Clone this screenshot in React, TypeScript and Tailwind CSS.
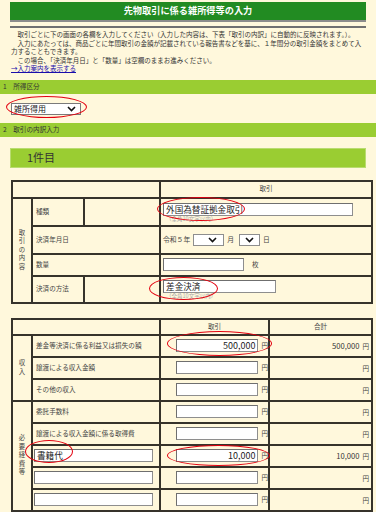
import React from "react";

// --- DATA ---
const incomeRows = [
  { label: "差金等決済に係る利益又は損失の額", amount: "500,000", total: "500,000" },
  { label: "譲渡による収入金額", amount: "", total: "" },
  { label: "その他の収入", amount: "", total: "" },
];

const expenseRows = [
  { label: "委託手数料", free: false, name: "", amount: "", total: "" },
  { label: "譲渡による収入金額に係る取得費", free: false, name: "", amount: "", total: "" },
  { label: "", free: true, name: "書籍代", amount: "10,000", total: "10,000" },
  { label: "", free: true, name: "", amount: "", total: "" },
  { label: "", free: true, name: "", amount: "", total: "" },
];

const td = "border-2 border-[#36332b] p-0";

// --- PARTS ---
function Ellipse({ className }: { className: string }) {
  return (
    <div
      className={`pointer-events-none absolute rounded-[50%] border-[1.5px] border-[#e3000f] ${className}`}
    />
  );
}

function Box({ value = "", className = "", right = false }: { value?: string; className?: string; right?: boolean }) {
  return (
    <div
      className={`flex items-center overflow-hidden whitespace-nowrap bg-white border border-[#8e8e8e] border-t-[#6f6f6f] border-l-[#6f6f6f] px-[2px] text-[8.6px] leading-none text-[#222] ${
        right ? "justify-end" : ""
      } ${className}`}
    >
      {value}
    </div>
  );
}

function Chevron() {
  return (
    <svg width="9" height="6" viewBox="0 0 9 6" className="shrink-0">
      <polyline points="1,1 4.5,4.5 8,1" fill="none" stroke="#111" strokeWidth="1.6" />
    </svg>
  );
}

function Vertical({ text }: { text: string }) {
  return (
    <div className="flex flex-col items-center text-[6.4px] text-[#444]">
      {text.split("").map((c, i) => (
        <span key={i} className="block h-[8.5px] leading-[8.5px]">
          {c}
        </span>
      ))}
    </div>
  );
}

function Bar({ children }: { children: React.ReactNode }) {
  return (
    <div className="flex h-[14px] items-center bg-[#9acd32] pl-[3px] text-[6.6px] text-[#333]">
      {children}
    </div>
  );
}

// --- MAIN ---
export default function App() {
  return (
    <div className="relative h-[512px] w-[376px] overflow-hidden bg-[#fff8dc] font-['Noto_Sans_CJK_JP','Noto_Sans',sans-serif]">
      {/* title */}
      <div className="mx-[10px] mt-[2px] flex h-[20px] items-center justify-center border-b-2 border-[#8c8c8c] bg-[#228b22] text-[9.2px] font-bold text-white">
        先物取引に係る雑所得等の入力
      </div>
      <div className="mx-[10px] mt-[4px] h-[2px] bg-[#707070]" />

      <div className="mt-[2px] whitespace-nowrap px-[11px] text-[6.5px] leading-[8.5px] text-[#333]">
        <div>　取引ごとに下の画面の各欄を入力してください（入力した内容は、下表「取引の内訳」に自動的に反映されます。）。</div>
        <div>　入力にあたっては、商品ごとに年間取引の金額が記載されている報告書などを基に、１年間分の取引金額をまとめて入</div>
        <div>力することもできます。</div>
        <div>　この場合、「決済年月日」と「数量」は空欄のままお進みください。</div>
        <div>
          　<span className="text-[#1a0dab] underline">→入力案内を表示する</span>
        </div>
      </div>

      <div className="mt-[7px]">
        <Bar>1　所得区分</Bar>
      </div>
      <div className="ml-[11px] mt-[9px] flex h-[12px] w-[70px] items-center justify-between border border-[#7a7a7a] bg-white pl-[2px] pr-[4px] text-[8px] text-[#222]">
        <span>雑所得用</span>
        <Chevron />
      </div>
      <div className="mt-[8px]">
        <Bar>2　取引の内訳入力</Bar>
      </div>

      <div className="mx-[10px] mt-[11px] flex h-[20px] items-center border border-[#b9dc70] bg-[#9acd32] pl-[16px] text-[11px] text-[#333]">
        1件目
      </div>

      {/* table 1 */}
      <table className="ml-[11px] mt-[12px] w-[360px] table-fixed border-collapse text-[6.6px] text-[#444]">
        <colgroup>
          <col className="w-[20px]" />
          <col className="w-[52px]" />
          <col className="w-[76px]" />
          <col className="w-[212px]" />
        </colgroup>
        <tbody>
          <tr className="h-[17px]">
            <td colSpan={3} className={td} />
            <td className={`${td} text-center`}>取引</td>
          </tr>
          <tr className="h-[28px]">
            <td rowSpan={4} className={td}>
              <Vertical text="取引の内容" />
            </td>
            <td className={`${td} pl-[3px]`}>種類</td>
            <td className={td} />
            <td className={`${td} pl-[2px]`}>
              <Box value="外国為替証拠金取引" className="mt-[2px] h-[13px] w-[190px]" />
              <div className="pl-[3px] text-[5.5px] leading-[7px] text-[#aaa]">（全角10文字以内）</div>
            </td>
          </tr>
          <tr className="h-[28px]">
            <td colSpan={2} className={`${td} pl-[3px]`}>決済年月日</td>
            <td className={`${td} pl-[2px]`}>
              <div className="flex items-center gap-[3px] text-[6.8px]">
                <span>令和５年</span>
                <div className="flex h-[12px] w-[31px] items-center justify-end border border-[#8e8e8e] bg-white pr-[6px]">
                  <Chevron />
                </div>
                <span>月</span>
                <div className="ml-[2px] flex h-[12px] w-[21px] items-center justify-center border border-[#8e8e8e] bg-white">
                  <Chevron />
                </div>
                <span>日</span>
              </div>
            </td>
          </tr>
          <tr className="h-[22px]">
            <td colSpan={2} className={`${td} pl-[3px]`}>数量</td>
            <td className={`${td} pl-[2px]`}>
              <div className="flex items-center gap-[8px]">
                <Box className="h-[13px] w-[81px]" />
                <span>枚</span>
              </div>
            </td>
          </tr>
          <tr className="h-[27px]">
            <td className={`${td} pl-[3px]`}>決済の方法</td>
            <td className={td} />
            <td className={`${td} pl-[2px]`}>
              <Box value="差金決済" className="mt-[2px] h-[13px] w-[113px]" />
              <div className="pl-[3px] text-[5.5px] leading-[7px] text-[#aaa]">（全角10文字以内）</div>
            </td>
          </tr>
        </tbody>
      </table>

      {/* table 2 */}
      <table className="ml-[11px] mt-[14px] w-[360px] table-fixed border-collapse text-[6.6px] text-[#444]">
        <colgroup>
          <col className="w-[20px]" />
          <col className="w-[128px]" />
          <col className="w-[109px]" />
          <col className="w-[103px]" />
        </colgroup>
        <tbody>
          <tr className="h-[16px]">
            <td colSpan={2} className={td} />
            <td className={`${td} text-center`}>取引</td>
            <td className={`${td} text-center`}>合計</td>
          </tr>
          {incomeRows.map((r, i) => (
            <tr key={r.label} className="h-[22px]">
              {i === 0 && (
                <td rowSpan={3} className={td}>
                  <Vertical text="収入" />
                </td>
              )}
              <td className={`${td} pl-[3px]`}>{r.label}</td>
              <td className={td}>
                <div className="flex items-center pl-[15px]">
                  <Box value={r.amount} right className="h-[13px] w-[83px] text-[9px]" />
                  <span className="ml-[3px]">円</span>
                </div>
              </td>
              <td className={`${td} pr-[2px] text-right`}>
                <span className="text-[7.6px] text-[#333]">{r.total}</span>
                <span className="ml-[3px]">円</span>
              </td>
            </tr>
          ))}
          {expenseRows.map((r, i) => (
            <tr key={i} className="h-[22px]">
              {i === 0 && (
                <td rowSpan={5} className={td}>
                  <Vertical text="必要経費等" />
                </td>
              )}
              <td className={`${td} pl-[1px]`}>
                {r.free ? <Box value={r.name} className="h-[13px] w-[119px] text-[8.6px]" /> : <span className="pl-[2px]">{r.label}</span>}
              </td>
              <td className={td}>
                <div className="flex items-center pl-[15px]">
                  <Box value={r.amount} right className="h-[13px] w-[83px] text-[9px]" />
                  <span className="ml-[3px]">円</span>
                </div>
              </td>
              <td className={`${td} pr-[2px] text-right`}>
                <span className="text-[7.6px] text-[#333]">{r.total}</span>
                <span className="ml-[3px]">円</span>
              </td>
            </tr>
          ))}
        </tbody>
      </table>

      {/* annotations */}
      <Ellipse className="left-[6px] top-[96px] h-[22px] w-[81px]" />
      <Ellipse className="left-[157px] top-[197px] h-[24px] w-[88px]" />
      <Ellipse className="left-[149px] top-[277px] h-[23px] w-[69px]" />
      <Ellipse className="left-[167px] top-[331px] h-[25px] w-[105px]" />
      <Ellipse className="left-[25px] top-[440px] h-[23px] w-[48px]" />
      <Ellipse className="left-[167px] top-[445px] h-[21px] w-[103px]" />
    </div>
  );
}
